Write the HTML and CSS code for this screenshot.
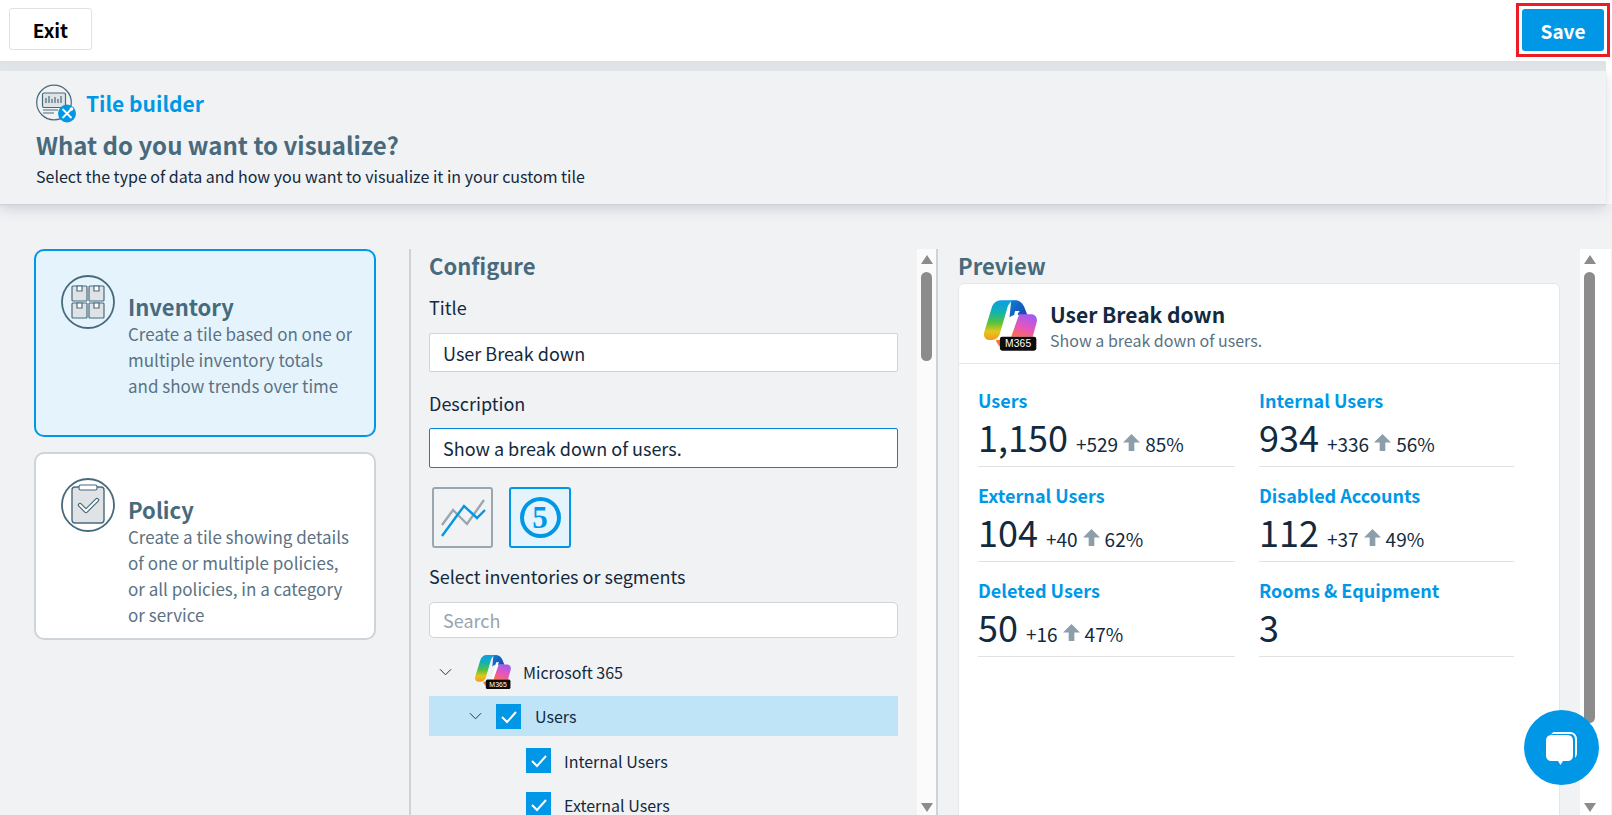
FILE: index.html
```html
<!DOCTYPE html>
<html lang="en">
  <head>
    <meta charset="UTF-8" />
    <meta name="viewport" content="width=device-width, initial-scale=1.0" />
    <title>Tile builder</title>
    <link rel="stylesheet" href="styles.css">
  </head>
  <body>
    <svg class="defs" aria-hidden="true">
      <defs>
        <linearGradient id="blade" x1="0" y1="0" x2="0" y2="1">
          <stop offset="0" stop-color="#0c9ce8" />
          <stop offset="0.3" stop-color="#12b3b0" />
          <stop offset="0.55" stop-color="#52c13f" />
          <stop offset="0.78" stop-color="#e2c71b" />
          <stop offset="1" stop-color="#f59a23" />
        </linearGradient>
        <linearGradient id="fold" x1="0" y1="0" x2="1" y2="1">
          <stop offset="0" stop-color="#0f7fd8" />
          <stop offset="1" stop-color="#1a3fa8" />
        </linearGradient>
        <linearGradient id="wing" x1="0.7" y1="0" x2="0.3" y2="1">
          <stop offset="0" stop-color="#9d5cf0" />
          <stop offset="0.55" stop-color="#e455c0" />
          <stop offset="1" stop-color="#fb6a5a" />
        </linearGradient>
        <symbol id="m365" viewBox="30 30 160 152">
          <path fill="url(#fold)" d="M112 30h12c14 0 24 10 29 24l8 20h-36c-8 0-14 3-18 8z" />
          <path fill="url(#wing)" d="M136 72h36c13 0 20 11 17 24l-12 44H112z" />
          <path fill="#f47a2a" d="M66 150h40l-6 22H88c-10 0-18-8-22-22z" />
          <path fill="url(#blade)" d="M82 30h42c-13 1-20 11-24 25l-21 72c-4 14-13 23-27 23h-6c-12 0-19-11-15-25l22-72c4-14 15-23 29-23z" />
          <path fill="#fff" d="M124 62l-22 80c-1 4-3 7-5 9 8-1 13-6 15-13l21-68c1-4 3-7 6-8z" />
          <rect x="78" y="140" width="110" height="42" rx="7" fill="#0c0c0c" />
          <text x="133" y="172" text-anchor="middle" class="logo-text">M365</text>
        </symbol>
      </defs>
    </svg>

    <div class="topbar">
      <button class="btn-exit">Exit</button>
      <div class="save-mark"><button class="btn-save">Save</button></div>
    </div>
    <div class="band"></div>

    <div class="header">
      <div class="header-brand">
        <svg class="brand-icon" viewBox="0 0 40 40">
          <circle cx="18" cy="19.5" r="17.3" fill="none" stroke="#486a7d" stroke-width="1.2" />
          <rect x="6.5" y="10" width="23" height="14.5" rx="1.5" fill="#dfe3e6" stroke="#486a7d" stroke-width="1.2" />
          <path d="M10 20v-5M13 20v-7M16 20v-4M19 20v-6M22 20v-4M25 20v-7" stroke="#486a7d" stroke-width="1.2" />
          <path d="M7 27h15M7 30h11" stroke="#486a7d" stroke-width="1.2" />
          <circle cx="31" cy="30.5" r="9" fill="#0098e6" />
          <path d="M26.5 26l9 9M35.5 26l-9 9" stroke="#fff" stroke-width="1.8" />
          <circle cx="35.5" cy="26" r="1.8" fill="#fff" />
        </svg>
        <span class="brand-name">Tile builder</span>
      </div>
      <h1 class="header-title">What do you want to visualize?</h1>
      <p class="header-sub">Select the type of data and how you want to visualize it in your custom tile</p>
    </div>

    <div class="main">
      <div class="choices">
        <div class="choice choice-active">
          <svg class="choice-icon" viewBox="0 0 54 54">
            <circle cx="27" cy="27" r="26" fill="none" stroke="#486a7d" stroke-width="1.8" />
            <g fill="#dfe3e6" stroke="#486a7d" stroke-width="1.2">
              <rect x="11" y="11" width="15" height="15" rx="1" />
              <rect x="28" y="11" width="15" height="15" rx="1" />
              <rect x="11" y="28" width="15" height="15" rx="1" />
              <rect x="28" y="28" width="15" height="15" rx="1" />
              <path fill="#fff" d="M16 11h5v5h-5zM33 11h5v5h-5zM16 28h5v5h-5zM33 28h5v5h-5z" />
            </g>
          </svg>
          <div class="choice-text">
            <div class="choice-title">Inventory</div>
            <div class="choice-desc">Create a tile based on one or<br>multiple inventory totals<br>and show trends over time</div>
          </div>
        </div>
        <div class="choice">
          <svg class="choice-icon" viewBox="0 0 54 54">
            <circle cx="27" cy="27" r="26" fill="none" stroke="#486a7d" stroke-width="1.8" />
            <rect x="11" y="9" width="32" height="36" rx="3" fill="#dfe3e6" stroke="#486a7d" stroke-width="1.4" />
            <rect x="18" y="7" width="18" height="5" rx="1.5" fill="#fff" stroke="#486a7d" stroke-width="1.2" />
            <path d="M19 27l6 6 11-11" fill="none" stroke="#486a7d" stroke-width="4.4" stroke-linejoin="round" stroke-linecap="round" />
            <path d="M19 27l6 6 11-11" fill="none" stroke="#fff" stroke-width="2" stroke-linejoin="round" stroke-linecap="round" />
          </svg>
          <div class="choice-text">
            <div class="choice-title">Policy</div>
            <div class="choice-desc">Create a tile showing details<br>of one or multiple policies,<br>or all policies, in a category<br>or service</div>
          </div>
        </div>
      </div>

      <div class="config-pane">
        <div class="config">
          <h2 class="section-title">Configure</h2>
          <div class="label label-title">Title</div>
          <div class="field field-title">User Break down</div>
          <div class="label label-desc">Description</div>
          <div class="field field-focus">Show a break down of users.</div>
          <div class="viz-types">
            <div class="viz">
              <svg viewBox="0 0 57 57" width="57" height="57">
                <polyline points="8,36 19,21 33,35 50,11" fill="none" stroke="#9aa7b0" stroke-width="2.4" />
                <polyline points="8,47 30,17 43,29 51,21" fill="none" stroke="#0098e6" stroke-width="2.4" />
              </svg>
            </div>
            <div class="viz viz-active"><span class="viz-five">5</span></div>
          </div>
          <div class="label label-select">Select inventories or segments</div>
          <div class="field field-search">Search</div>
          <div class="tree">
            <div class="tree-row tree-root">
              <svg class="chevron" viewBox="0 0 14 8"><path d="M1 1l6 6 6-6" /></svg>
              <svg class="logo-small"><use href="#m365" /></svg>
              <span>Microsoft 365</span>
            </div>
            <div class="tree-row tree-selected">
              <svg class="chevron" viewBox="0 0 14 8"><path d="M1 1l6 6 6-6" /></svg>
              <span class="check"><svg viewBox="0 0 25 25"><path d="M6 13l5 5 9-10" /></svg></span>
              <span>Users</span>
            </div>
            <div class="tree-row tree-leaf">
              <span class="check"><svg viewBox="0 0 25 25"><path d="M6 13l5 5 9-10" /></svg></span>
              <span>Internal Users</span>
            </div>
            <div class="tree-row tree-leaf">
              <span class="check"><svg viewBox="0 0 25 25"><path d="M6 13l5 5 9-10" /></svg></span>
              <span>External Users</span>
            </div>
          </div>
        </div>
        <div class="track">
          <div class="arrow-up"></div>
          <div class="thumb thumb-config"></div>
          <div class="arrow-down"></div>
        </div>
      </div>

      <div class="preview">
        <h2 class="section-title">Preview</h2>
        <div class="tile">
          <div class="tile-head">
            <svg class="logo-large"><use href="#m365" /></svg>
            <div>
              <div class="tile-name">User Break down</div>
              <div class="tile-desc">Show a break down of users.</div>
            </div>
          </div>
          <div class="stats">
            <div class="stat">
              <div class="stat-label">Users</div>
              <div class="stat-line"><span class="stat-num">1,150</span><span>+529</span><svg class="up" viewBox="0 0 18 18"><path d="M9 0l9 9h-6v9H6V9H0z" /></svg><span>85%</span></div>
            </div>
            <div class="stat">
              <div class="stat-label">Internal Users</div>
              <div class="stat-line"><span class="stat-num">934</span><span>+336</span><svg class="up" viewBox="0 0 18 18"><path d="M9 0l9 9h-6v9H6V9H0z" /></svg><span>56%</span></div>
            </div>
            <div class="stat">
              <div class="stat-label">External Users</div>
              <div class="stat-line"><span class="stat-num">104</span><span>+40</span><svg class="up" viewBox="0 0 18 18"><path d="M9 0l9 9h-6v9H6V9H0z" /></svg><span>62%</span></div>
            </div>
            <div class="stat">
              <div class="stat-label">Disabled Accounts</div>
              <div class="stat-line"><span class="stat-num">112</span><span>+37</span><svg class="up" viewBox="0 0 18 18"><path d="M9 0l9 9h-6v9H6V9H0z" /></svg><span>49%</span></div>
            </div>
            <div class="stat">
              <div class="stat-label">Deleted Users</div>
              <div class="stat-line"><span class="stat-num">50</span><span>+16</span><svg class="up" viewBox="0 0 18 18"><path d="M9 0l9 9h-6v9H6V9H0z" /></svg><span>47%</span></div>
            </div>
            <div class="stat">
              <div class="stat-label">Rooms &amp; Equipment</div>
              <div class="stat-line"><span class="stat-num">3</span></div>
            </div>
          </div>
        </div>
      </div>

      <div class="track track-page">
        <div class="arrow-up"></div>
        <div class="thumb thumb-page"></div>
        <div class="arrow-down"></div>
      </div>
    </div>

    <button class="chat" aria-label="Chat">
      <svg viewBox="0 0 34 34" width="34" height="34">
        <path d="M9 1h16c4 0 7 3 7 7v14c0 2-1 4-2 5V8c0-3-2-5-5-5H9c-1 0-2 0-3 .5C7 2 8 1 9 1z" fill="#fff" />
        <path d="M7 4h15c4 0 6 2 6 6v14c0 4-2 6-6 6h-4l-2.500 4-2.500-4H7c-4 0-6-2-6-6V10c0-4 2-6 6-6z" fill="#fff" />
      </svg>
    </button>
  </body>
</html>
```

FILE: styles.css
```css
* {
  margin: 0;
  padding: 0;
  box-sizing: border-box;
}

html,
body {
  height: 100%;
  overflow: hidden;
}

body {
  display: flex;
  flex-direction: column;
  background: #fff;
  color: #13293d;
  font-family: "Noto Sans CJK SC", "Noto Sans", sans-serif;
  font-size: 17px;
}

.defs {
  position: absolute;
  width: 0;
  height: 0;
}

.logo-text {
  fill: #fff;
  font-family: "Liberation Sans", sans-serif;
  font-size: 31px;
  letter-spacing: 0.5px;
}

button {
  font-family: inherit;
  cursor: pointer;
}

/* top bar */
.topbar {
  display: flex;
  flex: none;
  align-items: flex-start;
  justify-content: space-between;
  height: 61px;
  padding: 8px 2px 0 9px;
}

.btn-exit {
  width: 83px;
  height: 42px;
  border: 1px solid #dfe3e6;
  border-radius: 3px;
  background: #fff;
  color: #000;
  font-size: 19px;
  font-weight: 600;
}

.save-mark {
  margin-top: -5px;
  padding: 3px 3px;
  border: 3px solid #ed1c24;
}

.btn-save {
  display: block;
  width: 82px;
  height: 42px;
  border: 0;
  border-radius: 3px;
  background: #0098e6;
  color: #fff;
  font-size: 19px;
  font-weight: 600;
}

.band {
  flex: none;
  height: 10px;
  margin-right: 6px;
  background: linear-gradient(#dde1e4, #e7eaec);
}

/* header */
.header {
  position: relative;
  z-index: 1;
  flex: none;
  height: 133px;
  margin-right: 6px;
  padding: 12px 0 0 36px;
  background: #f1f2f4;
  box-shadow: 0 1px 1px #cdd3d8, 0 5px 12px rgba(120, 135, 148, 0.3);
}

.header-brand {
  display: flex;
  align-items: center;
  gap: 10px;
  height: 40px;
}

.brand-icon {
  width: 40px;
  height: 40px;
}

.brand-name {
  color: #0098e6;
  font-size: 21px;
  font-weight: 700;
  line-height: 30px;
}

.header-title {
  margin-top: 7px;
  color: #486a7d;
  font-size: 24px;
  font-weight: 600;
  line-height: 30px;
}

.header-sub {
  margin-top: 4px;
  font-size: 16px;
  line-height: 24px;
}

/* main area */
.main {
  display: flex;
  flex: 1;
  min-height: 0;
  padding-top: 45px;
  background: #f1f2f4;
  overflow: hidden;
}

.choices {
  display: flex;
  flex: none;
  flex-direction: column;
  gap: 15px;
  width: 342px;
  margin: 0 33px 0 34px;
}

.choice {
  display: flex;
  gap: 13px;
  height: 188px;
  padding: 24px 0 0 25px;
  border: 2px solid #ced4d9;
  border-radius: 10px;
  background: #fff;
  overflow: hidden;
}

.choice-active {
  border-color: #0098e6;
  background: #e5f4fc;
}

.choice-icon {
  flex: none;
  width: 54px;
  height: 54px;
}

.choice-text {
  padding-top: 16px;
}

.choice-title {
  color: #486a7d;
  font-size: 22px;
  font-weight: 600;
  line-height: 30px;
}

.choice-desc {
  max-height: 98px;
  color: #5b7283;
  font-size: 17px;
  line-height: 26px;
  overflow: hidden;
}

.config-pane {
  display: flex;
  flex: none;
  width: 529px;
  margin-top: 0;
  border-left: 2px solid #cdd3d8;
  border-right: 2px solid #cdd3d8;
}

.config {
  flex: none;
  width: 469px;
  margin: 0 19px 0 18px;
}

.section-title {
  color: #486a7d;
  font-size: 22px;
  font-weight: 600;
  line-height: 32px;
}

.label {
  font-size: 18px;
  line-height: 24px;
}

.label-title {
  margin: 14px 0 14px;
}

.label-desc {
  margin: 19px 0 13px;
}

.label-select {
  margin: 16px 0 14px;
}

.field {
  height: 39px;
  padding: 0 13px;
  border: 1px solid #ced4d9;
  border-radius: 2px;
  background: #fff;
  font-size: 18px;
  line-height: 38px;
}

.field-focus {
  height: 40px;
  border-color: #0084d6;
}

.field-search {
  height: 36px;
  border-radius: 5px;
  color: #9aa5ad;
  line-height: 35px;
}

.viz-types {
  display: flex;
  gap: 16px;
  margin: 19px 0 0 3px;
}

.viz {
  display: flex;
  align-items: center;
  justify-content: center;
  width: 61px;
  height: 61px;
  border: 2px solid #9aa7b0;
  border-radius: 3px;
}

.viz-active {
  width: 62px;
  border-color: #0098e6;
  background: #e5f4fc;
}

.viz-five {
  display: flex;
  align-items: center;
  justify-content: center;
  width: 41px;
  height: 41px;
  border: 4px solid #0098e6;
  border-radius: 50%;
  color: #0098e6;
  font-family: "Liberation Serif", serif;
  font-size: 31px;
  font-weight: 700;
  line-height: 1;
}

.tree {
  margin-top: 17px;
}

.tree-row {
  display: flex;
  align-items: center;
  font-size: 16px;
}

.chevron {
  flex: none;
  width: 13px;
  height: 8px;
  fill: none;
  stroke: #13293d;
  stroke-width: 1;
}

.tree-root {
  height: 34px;
  padding-left: 10px;
}

.logo-small {
  flex: none;
  width: 36px;
  height: 34px;
  margin: 0 12px 0 23px;
}

.tree-selected {
  height: 40px;
  margin-top: 7px;
  padding-left: 40px;
  background: #bfe4f8;
}

.tree-selected .check {
  margin: 0 14px;
}

.tree-leaf {
  height: 25px;
  margin-top: 12px;
  padding-left: 97px;
}

.tree-leaf + .tree-leaf {
  margin-top: 19px;
}

.tree-leaf .check {
  margin-right: 13px;
}

.check {
  display: block;
  flex: none;
  width: 25px;
  height: 25px;
  background: #0098e6;
}

.check svg {
  display: block;
  fill: none;
  stroke: #fff;
  stroke-width: 2;
}

/* scrollbars */
.track {
  display: flex;
  flex: none;
  flex-direction: column;
  align-items: center;
  width: 19px;
  padding-top: 6px;
  background: #fbfbfb;
}

.track-page {
  width: 31px;
  padding-right: 12px;
  background: #fff;
}

.arrow-up,
.arrow-down {
  flex: none;
  width: 0;
  height: 0;
  border-left: 6px solid transparent;
  border-right: 6px solid transparent;
}

.arrow-up {
  border-bottom: 9px solid #8c8c8c;
}

.arrow-down {
  border-top: 9px solid #8c8c8c;
}

.thumb {
  flex: none;
  width: 11px;
  margin-top: 8px;
  border-radius: 6px;
  background: #8c8c8c;
}

.thumb-config {
  height: 89px;
  margin-bottom: 442px;
}

.thumb-page {
  height: 451px;
  margin-bottom: 80px;
}

/* preview */
.preview {
  flex: none;
  width: 602px;
  margin: 0 20px 0 20px;
}

.tile {
  height: 600px;
  margin-top: 2px;
  border: 1px solid #e4e7ea;
  border-radius: 6px;
  background: #fff;
}

.tile-head {
  display: flex;
  gap: 13px;
  height: 80px;
  padding: 16px 0 0 25px;
  border-bottom: 1px solid #e4e7ea;
}

.logo-large {
  flex: none;
  width: 53px;
  height: 51px;
}

.tile-name {
  font-size: 21px;
  font-weight: 600;
  line-height: 28px;
}

.tile-desc {
  margin-top: 0;
  color: #5b7283;
  font-size: 16px;
  line-height: 24px;
}

.stats {
  display: grid;
  grid-template-columns: 257px 255px;
  grid-auto-rows: 95px;
  column-gap: 24px;
  margin-left: 19px;
  padding-top: 8px;
}

.stat {
  padding-top: 16px;
  border-bottom: 1px solid #dfe3e6;
}

.stat-label {
  color: #0098e6;
  font-size: 18px;
  font-weight: 600;
  line-height: 24px;
}

.stat-line {
  display: flex;
  align-items: baseline;
  height: 48px;
  font-size: 19px;
}

.stat-num {
  margin-right: 8px;
  font-size: 36px;
  line-height: 48px;
}

.up {
  width: 17px;
  height: 17px;
  margin: 0 5px;
  fill: #8b9ea9;
  align-self: flex-end;
  margin-bottom: 9px;
}

/* chat */
.chat {
  position: fixed;
  right: 13px;
  bottom: 30px;
  display: flex;
  align-items: center;
  justify-content: center;
  width: 75px;
  height: 75px;
  border: 0;
  border-radius: 50%;
  background: #0098e6;
}
```
